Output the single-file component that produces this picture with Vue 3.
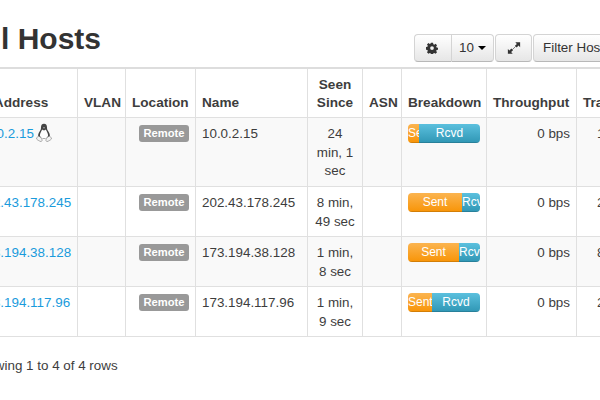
<template>
  <div class="page">
    <div class="head">
      <h2 class="title">All Hosts</h2>
      <div class="toolbar">
        <div class="btn-group">
          <button class="btn" type="button" aria-label="Settings">
            <svg class="icon" viewBox="0 0 16 16" aria-hidden="true">
              <path fill-rule="evenodd" d="M6.600 1h2.800l.4 2 1.200.5 1.700-1.100 2 2-1.100 1.700.5 1.200 2 .4v2.600l-2 .4-.5 1.200 1.100 1.700-2 2-1.700-1.100-1.200.5-.4 2H6.600l-.4-2-1.200-.5-1.700 1.100-2-2 1.100-1.700-.5-1.200-2-.4V6.700l2-.4.5-1.200-1.100-1.700 2-2 1.700 1.100 1.200-.5zM8 5.500a2.500 2.500 0 1 0 0 5 2.500 2.500 0 0 0 0-5z" />
            </svg>
          </button>
          <button class="btn btn--size" type="button">10 <span class="caret"></span></button>
        </div>
        <button class="btn btn--expand" type="button" aria-label="Fullscreen">
          <svg class="icon icon--wide" viewBox="0 0 16 16" aria-hidden="true">
            <path d="M9.500 1.500h5.500v5.500l-1.800-1.800-2.200 2.200-1.900-1.900 2.200-2.200zM6.500 14.500H1V9l1.800 1.800 2.200-2.200 1.900 1.900-2.200 2.200z" />
            <path d="M6 10l4-4" stroke="#333" stroke-width="0.7" />
          </svg>
        </button>
        <button class="btn btn--filter" type="button">Filter Hosts <span class="caret"></span></button>
      </div>
    </div>

    <table class="hosts">
      <colgroup>
        <col v-for="w in widths" :key="w.key" :style="{ width: w.px + 'px' }" />
      </colgroup>
      <thead>
        <tr>
          <th>IP Address</th>
          <th>VLAN</th>
          <th>Location</th>
          <th>Name</th>
          <th class="center">Seen Since</th>
          <th>ASN</th>
          <th>Breakdown</th>
          <th>Throughput</th>
          <th>Traffic</th>
        </tr>
      </thead>
      <tbody>
        <tr v-for="h in hosts" :key="h.ip">
          <td>
            <a class="link">{{ h.ip }}</a>
            <svg v-if="h.linux" class="tux" viewBox="0 0 16 20" aria-hidden="true">
              <path d="M8 .8C5.800.8 5 2.500 5 4.500c0 1.700-.5 2.700-1.400 4C2.500 10 1.900 11.800 2.200 13.500L8 16l5.800-2.500c.3-1.700-.3-3.500-1.400-5-.9-1.300-1.400-2.300-1.400-4C11 2.500 10.200.8 8 .8z" fill="#444" />
              <path d="M6.200 6.400C5.400 8 4 10 3.900 12.500c.3 1.500 1.300 3 4.100 3s3.800-1.500 4.100-3C12 10 10.600 8 9.800 6.400 9.200 7 8.700 7.200 8 7.200s-1.200-.2-1.800-.8z" fill="#fff" />
              <path d="M2.300 13.200c-.8.400-1.500 1.500-1.800 2.700.8 1 2.700 2.100 4.500 2.700.8-.3 1.300-1 1-1.900-.4-1.300-1.800-3.300-3.700-3.500zM13.700 13.200c.8.400 1.500 1.500 1.800 2.700-.8 1-2.700 2.100-4.500 2.700-.8-.3-1.300-1-1-1.900.4-1.300 1.800-3.300 3.700-3.500z" fill="#f4f4f4" stroke="#777" stroke-width="0.6" />
              <path d="M7 4.700l1-.5 1 .5-1 .8z" fill="#ddd" />
            </svg>
          </td>
          <td></td>
          <td class="right"><span class="badge">Remote</span></td>
          <td>{{ h.ip }}</td>
          <td class="center">{{ h.seen }}</td>
          <td></td>
          <td>
            <div class="bar">
              <div class="bar__sent" :style="{ width: h.sent + 'px' }">Sent</div>
              <div class="bar__rcvd">Rcvd</div>
            </div>
          </td>
          <td class="right">0 bps</td>
          <td class="right">{{ h.traffic }}</td>
        </tr>
      </tbody>
    </table>

    <p class="foot">Showing 1 to 4 of 4 rows</p>
  </div>
</template>

<script setup>
const widths = [
  { key: 'ip', px: 106 },
  { key: 'vlan', px: 48 },
  { key: 'loc', px: 70 },
  { key: 'name', px: 112 },
  { key: 'seen', px: 55 },
  { key: 'asn', px: 39 },
  { key: 'breakdown', px: 85 },
  { key: 'tput', px: 90 },
  { key: 'traffic', px: 62 }
]

const hosts = [
  { ip: '10.0.2.15', linux: true, seen: '24 min, 1 sec', sent: 11, traffic: '156 B' },
  { ip: '202.43.178.245', seen: '8 min, 49 sec', sent: 54, traffic: '236 B' },
  { ip: '173.194.38.128', seen: '1 min, 8 sec', sent: 51, traffic: '864 B' },
  { ip: '173.194.117.96', seen: '1 min, 9 sec', sent: 24, traffic: '212 B' }
]
</script>

<style>
html,
body {
  overflow: hidden;
  background: #fff;
}
</style>

<style scoped>
.page {
  width: 682px;
  margin-left: -29px;
  padding-top: 20px;
  font-family: "Liberation Sans", Arial, sans-serif;
  font-size: 13.4px;
  line-height: 18.7px;
  color: #3d3d3d;
}

.head {
  display: flex;
  justify-content: space-between;
  align-items: flex-end;
  height: 42px;
  padding-bottom: 5px;
}

.title {
  align-self: flex-start;
  margin: 0;
  font-size: 30px;
  line-height: 38px;
  font-weight: 700;
  color: #333;
}

.toolbar {
  display: flex;
  gap: 1px;
}

.btn-group {
  display: flex;
}

.btn {
  display: flex;
  align-items: center;
  justify-content: center;
  gap: 4px;
  height: 28px;
  padding: 0;
  border: 1px solid #d4d4d4;
  border-bottom-color: #b8b8b8;
  border-radius: 4px;
  background: linear-gradient(#fff, #e6e6e6);
  color: #333;
  font: inherit;
}

.btn-group .btn:first-child {
  width: 37px;
  padding-right: 2px;
  border-right: 0;
  border-radius: 4px 0 0 4px;
}

.btn--size {
  width: 43px;
  border-radius: 0 4px 4px 0;
}

.btn--expand {
  width: 37px;
}

.btn--filter {
  width: 120px;
  justify-content: flex-start;
  padding-left: 9px;
}

.icon {
  width: 12px;
  height: 12px;
  fill: #333;
}

.icon--wide {
  width: 14px;
  height: 14px;
}

.caret {
  width: 0;
  height: 0;
  border-top: 4px solid #000;
  border-left: 4px solid transparent;
  border-right: 4px solid transparent;
}

.hosts {
  width: 667px;
  table-layout: fixed;
  border-collapse: collapse;
  border-top: 2px solid #ddd;
  border-left: 1px solid #ddd;
}

.hosts th,
.hosts td {
  padding: 6.5px 6px 4.5px;
  border: 1px solid #e0e0e0;
  vertical-align: top;
  text-align: left;
}

.hosts tbody tr {
  height: 50px;
}

.hosts tbody tr + tr td {
  padding: 7.5px 6px 3px;
}

.hosts th {
  vertical-align: bottom;
  font-size: 13.6px;
  font-weight: 700;
}

.hosts tbody tr:nth-child(odd) td {
  background: #f9f9f9;
}

.hosts .center {
  text-align: center;
}

.hosts .right {
  text-align: right;
}

.link {
  color: #1a9bdc;
}

.tux {
  width: 16px;
  height: 20px;
  margin: -2px 0 -4px 2px;
  vertical-align: top;
}

.badge {
  display: inline-block;
  padding: 0 4.500px;
  border-radius: 3px;
  background: #999;
  color: #fff;
  font-size: 11.2px;
  font-weight: 700;
  line-height: 17px;
  vertical-align: top;
}

.bar {
  display: flex;
  width: 72px;
  height: 19px;
  margin-top: -1px;
  overflow: hidden;
  border-radius: 4px;
  color: #fff;
  font-size: 12px;
  line-height: 18px;
  text-align: center;
  white-space: nowrap;
}

.bar__sent {
  flex: none;
  overflow: hidden;
  background: linear-gradient(#fbb450, #f89406);
  box-shadow: inset 0 -1px 0 rgba(0, 0, 0, 0.15);
}

.bar__rcvd {
  flex: 1;
  min-width: 0;
  overflow: hidden;
  background: linear-gradient(#5bc0de, #2f96b4);
  box-shadow: inset 0 -1px 0 rgba(0, 0, 0, 0.15);
}

.foot {
  margin: 20px 0 0 0;
}
</style>
